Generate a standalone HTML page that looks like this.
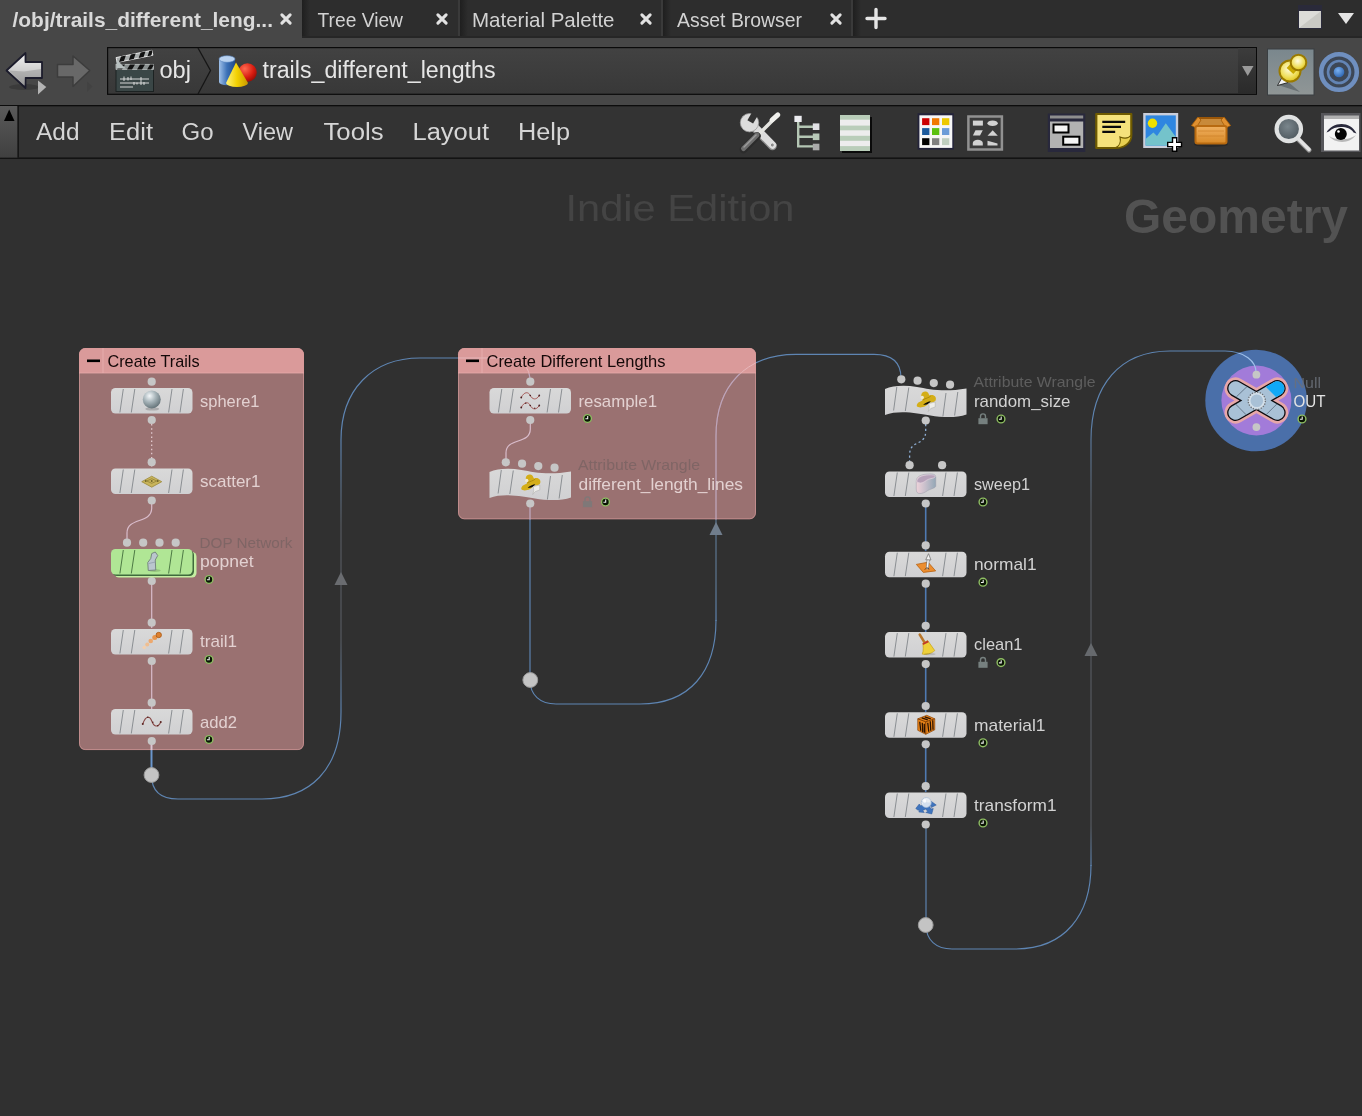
<!DOCTYPE html>
<html><head><meta charset="utf-8"><title>Houdini Network Editor</title>
<style>
html,body{margin:0;padding:0;background:#303030;overflow:hidden}
svg{display:block;font-family:"Liberation Sans", sans-serif;will-change:transform}
text{white-space:pre}
</style></head><body>
<svg width="1362" height="1116" viewBox="0 0 1362 1116">
<defs>
<linearGradient id="gNode" x1="0" y1="0" x2="0" y2="1"><stop offset="0" stop-color="#d9d9d9"/><stop offset="1" stop-color="#d0d0d2"/></linearGradient>
<linearGradient id="gPath" x1="0" y1="0" x2="0" y2="1"><stop offset="0" stop-color="#424242"/><stop offset="1" stop-color="#383838"/></linearGradient>
<linearGradient id="gSweep" x1="0" y1="0" x2="1" y2="0"><stop offset="0" stop-color="#efd3da"/><stop offset="0.45" stop-color="#c9c0cc"/><stop offset="1" stop-color="#93a7b6"/></linearGradient>
<radialGradient id="gSphere" cx="0.38" cy="0.3" r="0.75"><stop offset="0" stop-color="#f4f8fa"/><stop offset="0.45" stop-color="#a9b6bb"/><stop offset="1" stop-color="#5e6d73"/></radialGradient>
</defs>

<rect x="0" y="0" width="1362" height="1116" fill="#303030"/>
<g id="tabbar">
<rect x="0" y="0" width="1362" height="38" fill="#2d2d2d"/>
<rect x="0" y="0" width="302" height="40" fill="#474747"/>
<rect x="0" y="38" width="1362" height="67" fill="#474747"/>
<defs><linearGradient id="gSep" x1="0" y1="0" x2="1" y2="0"><stop offset="0" stop-color="#1f1f1f"/><stop offset="1" stop-color="#2d2d2d"/></linearGradient></defs>
<rect x="302" y="0" width="8" height="38" fill="url(#gSep)"/>
<rect x="460" y="0" width="8" height="38" fill="url(#gSep)"/>
<rect x="458" y="0" width="2" height="38" fill="#3a3a3a"/>
<rect x="663" y="0" width="8" height="38" fill="url(#gSep)"/>
<rect x="661" y="0" width="2" height="38" fill="#3a3a3a"/>
<rect x="853" y="0" width="8" height="38" fill="url(#gSep)"/>
<rect x="851" y="0" width="2" height="38" fill="#3a3a3a"/>
<rect x="302" y="36" width="1060" height="2" fill="#262626"/>
<text x="12.5" y="26.5" font-size="20.8" fill="#d9d9d9" textLength="260.5" lengthAdjust="spacingAndGlyphs" font-weight="bold" >/obj/trails_different_leng...</text>
<text x="317.5" y="26.5" font-size="20.8" fill="#d2d2d2" textLength="85.5" lengthAdjust="spacingAndGlyphs" >Tree View</text>
<text x="472" y="26.5" font-size="20.8" fill="#d2d2d2" textLength="142.5" lengthAdjust="spacingAndGlyphs" >Material Palette</text>
<text x="677" y="26.5" font-size="20.8" fill="#d2d2d2" textLength="125" lengthAdjust="spacingAndGlyphs" >Asset Browser</text>
<path d="M281.9 14.9L290.1 23.1M290.1 14.9L281.9 23.1" stroke="#e2e2e2" stroke-width="3.1" stroke-linecap="round" fill="none"/>
<path d="M437.9 14.9L446.1 23.1M446.1 14.9L437.9 23.1" stroke="#e2e2e2" stroke-width="3.1" stroke-linecap="round" fill="none"/>
<path d="M641.9 14.9L650.1 23.1M650.1 14.9L641.9 23.1" stroke="#e2e2e2" stroke-width="3.1" stroke-linecap="round" fill="none"/>
<path d="M831.9 14.9L840.1 23.1M840.1 14.9L831.9 23.1" stroke="#e2e2e2" stroke-width="3.1" stroke-linecap="round" fill="none"/>
<path d="M876 9.5V27.5M867 18.5H885" stroke="#e6e6e6" stroke-width="3.4" stroke-linecap="round" fill="none"/>
<rect x="1298" y="5" width="24" height="24" fill="#2a2a3a"/>
<rect x="1299" y="11" width="22" height="17" fill="#dcdcd8"/>
<path d="M1299 28L1321 11V28Z" fill="#c9c9c4"/>
<path d="M1338 13H1354L1346 24Z" fill="#e4e4e4"/>
</g>
<g id="pathbar">
<rect x="107.600" y="47.600" width="1148.800" height="46.700" fill="url(#gPath)" stroke="#0a0a0a" stroke-width="1.2"/>
<defs><linearGradient id="gDD" x1="0" y1="0" x2="0" y2="1"><stop offset="0" stop-color="#3c3c3c"/><stop offset="1" stop-color="#2a2a2a"/></linearGradient></defs>
<rect x="1238" y="48" width="18" height="46" fill="url(#gDD)"/>
<path d="M1242 66H1253.500L1247.700 76Z" fill="#9a9a9a"/>
<path d="M198 48L210.500 70.500L198 94" stroke="#161616" stroke-width="1.3" fill="none"/>
<text x="159.5" y="77.5" font-size="23" fill="#e6e6e6" textLength="31.5" lengthAdjust="spacingAndGlyphs" >obj</text>
<text x="262.5" y="77.5" font-size="23" fill="#e6e6e6" textLength="233" lengthAdjust="spacingAndGlyphs" >trails_different_lengths</text>
</g>
<g id="menubar">
<rect x="0" y="105" width="1362" height="54" fill="#333333"/>
<rect x="0" y="105" width="1362" height="1.3" fill="#0c0c0c"/>
<rect x="0" y="157.500" width="1362" height="1.300" fill="#0c0c0c"/>
<defs><linearGradient id="gHandle" x1="0" y1="0" x2="0" y2="1"><stop offset="0" stop-color="#5a5a5a"/><stop offset="1" stop-color="#404040"/></linearGradient></defs>
<rect x="0" y="106" width="17.500" height="51.500" fill="url(#gHandle)"/>
<rect x="17.500" y="106" width="1.300" height="51.500" fill="#101010"/>
<path d="M4 121H14.500L9.200 109.500Z" fill="#000"/>
<text x="36" y="139.5" font-size="23" fill="#d6d6d6" textLength="43.5" lengthAdjust="spacingAndGlyphs" >Add</text>
<text x="109" y="139.5" font-size="23" fill="#d6d6d6" textLength="44" lengthAdjust="spacingAndGlyphs" >Edit</text>
<text x="181.5" y="139.5" font-size="23" fill="#d6d6d6" textLength="32.0" lengthAdjust="spacingAndGlyphs" >Go</text>
<text x="242.5" y="139.5" font-size="23" fill="#d6d6d6" textLength="50.5" lengthAdjust="spacingAndGlyphs" >View</text>
<text x="323.5" y="139.5" font-size="23" fill="#d6d6d6" textLength="60.0" lengthAdjust="spacingAndGlyphs" >Tools</text>
<text x="412.5" y="139.5" font-size="23" fill="#d6d6d6" textLength="76.5" lengthAdjust="spacingAndGlyphs" >Layout</text>
<text x="518" y="139.5" font-size="23" fill="#d6d6d6" textLength="52" lengthAdjust="spacingAndGlyphs" >Help</text>
</g>
<text x="565.5" y="220.5" font-size="37" fill="#444444" textLength="229" lengthAdjust="spacingAndGlyphs" >Indie Edition</text>
<text x="1124" y="233" font-size="47.5" fill="#525252" textLength="224" lengthAdjust="spacingAndGlyphs" font-weight="bold" >Geometry</text>
<defs>
<linearGradient id="gW1" gradientUnits="userSpaceOnUse" x1="0" y1="350" x2="0" y2="800"><stop offset="0" stop-color="#5e85b3"/><stop offset="0.2" stop-color="#5e85b3"/><stop offset="0.389" stop-color="#565a60"/><stop offset="0.644" stop-color="#565a60"/><stop offset="0.804" stop-color="#5e85b3"/><stop offset="1" stop-color="#5e85b3"/></linearGradient>
<linearGradient id="gW2" gradientUnits="userSpaceOnUse" x1="0" y1="350" x2="0" y2="705"><stop offset="0" stop-color="#5e85b3"/><stop offset="0.338" stop-color="#5e85b3"/><stop offset="0.479" stop-color="#5d7894"/><stop offset="0.648" stop-color="#5d7894"/><stop offset="0.761" stop-color="#5e85b3"/><stop offset="1" stop-color="#5e85b3"/></linearGradient>
<linearGradient id="gW3" gradientUnits="userSpaceOnUse" x1="0" y1="350" x2="0" y2="950"><stop offset="0" stop-color="#5e85b3"/><stop offset="0.108" stop-color="#5e85b3"/><stop offset="0.267" stop-color="#565a60"/><stop offset="0.792" stop-color="#565a60"/><stop offset="0.86" stop-color="#5e85b3"/><stop offset="1" stop-color="#5e85b3"/></linearGradient>
<clipPath id="cBoxes"><rect x="79" y="348" width="225" height="402.500" rx="8"/><rect x="458" y="348" width="298" height="171.500" rx="8"/></clipPath>
<clipPath id="cRing"><circle cx="1256.2" cy="400.5" r="50.800"/></clipPath>
</defs>
<path d="M151.500 740V775C151.500 790 160 799 178 799H262C310 799 341 770 341 712V440C341 390 372 358 420 358H505C520 358 530 366 530 381" stroke="url(#gW1)" stroke-width="1.15" fill="none" />
<path d="M716 621V436C716 386 746 354.300 796 354.300H874C892 354.300 901 362 901 378" stroke="url(#gW2)" stroke-width="1.15" fill="none" />
<path d="M530 502V680C530 695 540 704 556 704H640C690 704 716 672 716 620" stroke="#5e85b3" stroke-width="1.15" fill="none" />
<path d="M1091 866V440C1091 385 1120 351 1170 351H1225C1245 351 1256 362 1256 378" stroke="url(#gW3)" stroke-width="1.15" fill="none" />
<path d="M926 823V925C926 940 936 949 952 949H1015C1065 949 1091 915 1091 865" stroke="#5e85b3" stroke-width="1.15" fill="none" />
<path d="M334.5 585H347.5L341 572Z" fill="#6a6c70"/>
<path d="M709.5 535H722.5L716 522Z" fill="#707d8c"/>
<path d="M1084.5 656H1097.5L1091 643Z" fill="#66696d"/>
<rect x="79" y="348" width="225" height="402.1" rx="6.5" fill="#c48a8a" fill-opacity="0.72"/>
<rect x="79.5" y="348.5" width="224" height="401.1" rx="6.0" fill="none" stroke="#e0a2a2" stroke-opacity="0.55" stroke-width="1"/>
<path d="M79 373V354.5A6.5 6.5 0 0 1 85.5 348H297.5A6.5 6.5 0 0 1 304 354.5V373Z" fill="#da9a9a"/>
<rect x="458" y="348" width="298" height="171.3" rx="6.5" fill="#c48a8a" fill-opacity="0.72"/>
<rect x="458.5" y="348.5" width="297" height="170.3" rx="6.0" fill="none" stroke="#e0a2a2" stroke-opacity="0.55" stroke-width="1"/>
<path d="M458 373V354.5A6.5 6.5 0 0 1 464.5 348H749.5A6.5 6.5 0 0 1 756 354.5V373Z" fill="#da9a9a"/>
<clipPath id="cBody"><rect x="79" y="373.500" width="225" height="377"/><rect x="458" y="373.500" width="298" height="146"/></clipPath>
<clipPath id="cHead"><rect x="79" y="348" width="225" height="25.500"/><rect x="458" y="348" width="298" height="25.500"/></clipPath>
<path d="M151.500 740V775C151.500 790 160 799 178 799H262C310 799 341 770 341 712V440C341 390 372 358 420 358H505C520 358 530 366 530 381" stroke="#bfa5ba" stroke-width="1.1" fill="none" clip-path="url(#cBody)"/>
<path d="M530 502V680C530 695 540 704 556 704H640C690 704 716 672 716 620V436C716 386 746 354.300 796 354.300H874C892 354.300 901 362 901 378" stroke="#bfa5ba" stroke-width="1.1" fill="none" clip-path="url(#cBody)"/>
<path d="M151.500 740V775C151.500 790 160 799 178 799H262C310 799 341 770 341 712V440C341 390 372 358 420 358H505C520 358 530 366 530 381" stroke="#e6b6ba" stroke-width="1" fill="none" clip-path="url(#cHead)"/>
<path d="M530 502V680C530 695 540 704 556 704H640C690 704 716 672 716 620V436C716 386 746 354.300 796 354.300H874C892 354.300 901 362 901 378" stroke="#e6b6ba" stroke-width="1" fill="none" clip-path="url(#cHead)"/>
<path d="M151.500 744V750.200" stroke="#dcc4d2" stroke-width="1.9" fill="none" />
<path d="M151.500 750.200V768" stroke="#6a96cc" stroke-width="1.9" fill="none" />
<rect x="79" y="372.5" width="225" height="1" fill="#e6aaaa" opacity="0.8"/>
<rect x="102.5" y="348" width="1" height="25" fill="#e8b0b0" opacity="0.8"/>
<rect x="87" y="359.5" width="13" height="2.600" fill="#000"/>
<text x="107.5" y="366.5" font-size="16.2" fill="#140808" textLength="92" lengthAdjust="spacingAndGlyphs" >Create Trails</text>
<rect x="458" y="372.5" width="298" height="1" fill="#e6aaaa" opacity="0.8"/>
<rect x="481.5" y="348" width="1" height="25" fill="#e8b0b0" opacity="0.8"/>
<rect x="466" y="359.5" width="13" height="2.600" fill="#000"/>
<text x="486.5" y="366.5" font-size="16.2" fill="#140808" textLength="179" lengthAdjust="spacingAndGlyphs" >Create Different Lengths</text>
<path d="M151.700 420V468" stroke="#e6cfd4" stroke-width="1.200" stroke-dasharray="1.5 2.6" fill="none"/>
<path d="M151.700 500V508C151.700 524 127 517 127 533V540" stroke="#d9bccb" stroke-width="1.2" fill="none" />
<path d="M151.700 580V628" stroke="#d9bccb" stroke-width="1.2" fill="none" />
<path d="M151.700 660V709" stroke="#d9bccb" stroke-width="1.2" fill="none" />
<path d="M530.300 420V429C530.300 445 506 437 506 453V460" stroke="#d9bccb" stroke-width="1.2" fill="none" />
<circle cx="151.7" cy="381.7" r="4.1" fill="#c6c6c6"/>
<circle cx="151.75" cy="420.0" r="4.1" fill="#c6c6c6"/>
<rect x="111" y="388.0" width="81.5" height="25.5" rx="4.500" fill="url(#gNode)"/>
<path d="M123.3 389.0L119.9 412.5" stroke="#8b8f93" stroke-width="1" fill="none"/>
<path d="M134.8 389.0L131.3 412.5" stroke="#8b8f93" stroke-width="1" fill="none"/>
<path d="M172 389.0L168.6 412.5" stroke="#8b8f93" stroke-width="1" fill="none"/>
<path d="M183.4 389.0L180 412.5" stroke="#8b8f93" stroke-width="1" fill="none"/>
<g transform="translate(151.75 400.5)"><ellipse cx="0.500" cy="8.500" rx="7" ry="1.600" fill="#000" opacity="0.18"/><circle cx="0" cy="-1" r="9" fill="url(#gSphere)"/></g>
<text x="200.0" y="407.0" font-size="16.6" fill="#e3d1d1" textLength="59.5" lengthAdjust="spacingAndGlyphs" >sphere1</text>
<circle cx="151.7" cy="462.2" r="4.1" fill="#c6c6c6"/>
<circle cx="151.75" cy="500.5" r="4.1" fill="#c6c6c6"/>
<rect x="111" y="468.5" width="81.5" height="25.5" rx="4.500" fill="url(#gNode)"/>
<path d="M123.3 469.5L119.9 493.0" stroke="#8b8f93" stroke-width="1" fill="none"/>
<path d="M134.8 469.5L131.3 493.0" stroke="#8b8f93" stroke-width="1" fill="none"/>
<path d="M172 469.5L168.6 493.0" stroke="#8b8f93" stroke-width="1" fill="none"/>
<path d="M183.4 469.5L180 493.0" stroke="#8b8f93" stroke-width="1" fill="none"/>
<g transform="translate(151.75 481)"><path d="M-10 0.700L0 -4.800L10 0.700L0 6.200Z" fill="#c9b45a" stroke="#9c8a3c" stroke-width="0.800"/><path d="M-5 0L0 -2.300L5 0L0 2.300Z" fill="none" stroke="#8a7a30" stroke-width="0.700"/><circle cx="-6" cy="0" r="0.900" fill="#6e6226"/><circle cx="6" cy="0" r="0.900" fill="#6e6226"/><circle cx="0" cy="0" r="0.900" fill="#6e6226"/></g>
<text x="200.0" y="487" font-size="16.6" fill="#e3d1d1" textLength="60.5" lengthAdjust="spacingAndGlyphs" >scatter1</text>
<circle cx="127" cy="542.7" r="4.1" fill="#c6c6c6"/>
<circle cx="143.2" cy="542.7" r="4.1" fill="#c6c6c6"/>
<circle cx="159.5" cy="542.7" r="4.1" fill="#c6c6c6"/>
<circle cx="175.7" cy="542.7" r="4.1" fill="#c6c6c6"/>
<circle cx="151.75" cy="581.0" r="4.1" fill="#c6c6c6"/>
<rect x="114.5" y="552.0" width="82.0" height="25.5" rx="4.500" fill="#c4efa2"/>
<rect x="112.5" y="550.5" width="81.5" height="25.5" rx="4.500" fill="#3f6b3c"/>
<rect x="111" y="549.0" width="81.5" height="25.5" rx="4.500" fill="#b0e695"/>
<path d="M123.3 550.0L119.9 573.5" stroke="#4d7a45" stroke-width="1" fill="none"/>
<path d="M134.8 550.0L131.3 573.5" stroke="#4d7a45" stroke-width="1" fill="none"/>
<path d="M172 550.0L168.6 573.5" stroke="#4d7a45" stroke-width="1" fill="none"/>
<path d="M183.4 550.0L180 573.5" stroke="#4d7a45" stroke-width="1" fill="none"/>
<g transform="translate(151.75 561.5)"><ellipse cx="3" cy="9" rx="6" ry="1.500" fill="#000" opacity="0.15"/><path d="M-3.500 9L-4 1L-1 -3L0 -8L3.500 -9.500L6 -6L3.500 -1.500L4 8.500Z" fill="#bac6ce" stroke="#6e7f78" stroke-width="0.900"/><path d="M-3 2L3.500 0.500" stroke="#8a97a6" stroke-width="0.700"/></g>
<text x="199.5" y="547.7" font-size="14.3" fill="#7f6565" textLength="93" lengthAdjust="spacingAndGlyphs" >DOP Network</text>
<text x="200.0" y="566.8" font-size="16.6" fill="#e3d1d1" textLength="53.5" lengthAdjust="spacingAndGlyphs" >popnet</text>
<circle cx="209.0" cy="579.5" r="3.900" fill="#0a1404" stroke="#8fbf63" stroke-width="1.400"/>
<path d="M209.2 577.1V579.8H206.9" stroke="#f2f2f2" stroke-width="1.100" fill="none"/>
<circle cx="151.7" cy="622.7" r="4.1" fill="#c6c6c6"/>
<circle cx="151.75" cy="661.0" r="4.1" fill="#c6c6c6"/>
<rect x="111" y="629.0" width="81.5" height="25.5" rx="4.500" fill="url(#gNode)"/>
<path d="M123.3 630.0L119.9 653.5" stroke="#8b8f93" stroke-width="1" fill="none"/>
<path d="M134.8 630.0L131.3 653.5" stroke="#8b8f93" stroke-width="1" fill="none"/>
<path d="M172 630.0L168.6 653.5" stroke="#8b8f93" stroke-width="1" fill="none"/>
<path d="M183.4 630.0L180 653.5" stroke="#8b8f93" stroke-width="1" fill="none"/>
<g transform="translate(151.75 641.5)"><circle cx="-7.500" cy="6" r="1.800" fill="#f2d0b0"/><circle cx="-4.500" cy="3" r="2" fill="#f0be90"/><circle cx="-1" cy="-0.500" r="2.300" fill="#eda86e"/><circle cx="3" cy="-4" r="2.500" fill="#e8964e"/><circle cx="7" cy="-6.500" r="2.700" fill="#dd8030" stroke="#a85a18" stroke-width="0.800"/></g>
<text x="200.0" y="646.7" font-size="16.6" fill="#e3d1d1" textLength="37" lengthAdjust="spacingAndGlyphs" >trail1</text>
<circle cx="209.0" cy="659.5" r="3.900" fill="#0a1404" stroke="#8fbf63" stroke-width="1.400"/>
<path d="M209.2 657.1V659.8H206.9" stroke="#f2f2f2" stroke-width="1.100" fill="none"/>
<circle cx="151.7" cy="702.7" r="4.1" fill="#c6c6c6"/>
<circle cx="151.75" cy="741.0" r="4.1" fill="#c6c6c6"/>
<rect x="111" y="709.0" width="81.5" height="25.5" rx="4.500" fill="url(#gNode)"/>
<path d="M123.3 710.0L119.9 733.5" stroke="#8b8f93" stroke-width="1" fill="none"/>
<path d="M134.8 710.0L131.3 733.5" stroke="#8b8f93" stroke-width="1" fill="none"/>
<path d="M172 710.0L168.6 733.5" stroke="#8b8f93" stroke-width="1" fill="none"/>
<path d="M183.4 710.0L180 733.5" stroke="#8b8f93" stroke-width="1" fill="none"/>
<g transform="translate(151.75 721.5)"><path d="M-9 2.500C-6 -6 -2 -6 0 -0.500S6 7 9 0.500" stroke="#864644" stroke-width="1.050" fill="none"/><circle cx="-9" cy="2.500" r="1" fill="#5a2220"/><circle cx="-4" cy="-4.200" r="0.800" fill="#5a2220"/><circle cx="1" cy="0.800" r="0.800" fill="#5a2220"/><circle cx="6" cy="4.200" r="0.800" fill="#5a2220"/><circle cx="9" cy="0.500" r="1" fill="#5a2220"/></g>
<text x="200.0" y="727.5" font-size="16.6" fill="#e3d1d1" textLength="37" lengthAdjust="spacingAndGlyphs" >add2</text>
<circle cx="209.0" cy="739.5" r="3.900" fill="#0a1404" stroke="#8fbf63" stroke-width="1.400"/>
<path d="M209.2 737.1V739.8H206.9" stroke="#f2f2f2" stroke-width="1.100" fill="none"/>
<circle cx="530.3" cy="381.7" r="4.1" fill="#c6c6c6"/>
<circle cx="530.25" cy="420.0" r="4.1" fill="#c6c6c6"/>
<rect x="489.5" y="388.0" width="81.5" height="25.5" rx="4.500" fill="url(#gNode)"/>
<path d="M501.8 389.0L498.4 412.5" stroke="#8b8f93" stroke-width="1" fill="none"/>
<path d="M513.3 389.0L509.8 412.5" stroke="#8b8f93" stroke-width="1" fill="none"/>
<path d="M550.5 389.0L547.1 412.5" stroke="#8b8f93" stroke-width="1" fill="none"/>
<path d="M561.9 389.0L558.5 412.5" stroke="#8b8f93" stroke-width="1" fill="none"/>
<g transform="translate(530.25 400.5)"><path d="M-9 -3C-6 -9 -2 -9 0 -5S6 0 9 -5" stroke="#a85c5a" stroke-width="1" fill="none"/><path d="M-9 7C-6 1 -2 1 0 5S6 10 9 5" stroke="#a85c5a" stroke-width="1" fill="none"/><circle cx="-9" cy="-3" r="0.900" fill="#4a2020"/><circle cx="0" cy="-5" r="0.800" fill="#4a2020"/><circle cx="9" cy="-5" r="0.900" fill="#4a2020"/><circle cx="-9" cy="7" r="0.900" fill="#4a2020"/><circle cx="-4.500" cy="2.800" r="0.700" fill="#4a2020"/><circle cx="0" cy="5" r="0.800" fill="#4a2020"/><circle cx="4.500" cy="7.800" r="0.700" fill="#4a2020"/><circle cx="9" cy="5" r="0.900" fill="#4a2020"/></g>
<text x="578.5" y="407.0" font-size="16.6" fill="#e3d1d1" textLength="78.5" lengthAdjust="spacingAndGlyphs" >resample1</text>
<circle cx="587.5" cy="418.5" r="3.900" fill="#0a1404" stroke="#8fbf63" stroke-width="1.400"/>
<path d="M587.7 416.1V418.8H585.4" stroke="#f2f2f2" stroke-width="1.100" fill="none"/>
<circle cx="505.8" cy="462.3" r="4.1" fill="#c6c6c6"/>
<circle cx="522.05" cy="463.7" r="4.1" fill="#c6c6c6"/>
<circle cx="538.3" cy="466.1" r="4.1" fill="#c6c6c6"/>
<circle cx="554.55" cy="467.7" r="4.1" fill="#c6c6c6"/>
<circle cx="530.25" cy="503.5" r="4.1" fill="#c6c6c6"/>
<path d="M489.5 472.0C497.5 468.5 509.5 468.0 521.5 470.0S547.5 475.5 571.0 471.5V497.5C561.0 501.0 547.0 500.5 535.0 498.5S503.5 492.5 489.5 498.0Z" fill="url(#gNode)"/>
<path d="M501.3 470.0L498.1 493.5" stroke="#8b8f93" stroke-width="1" fill="none"/>
<path d="M513.3 470.5L509.8 494.0" stroke="#8b8f93" stroke-width="1" fill="none"/>
<path d="M550.5 476.0L547.4 499.5" stroke="#8b8f93" stroke-width="1" fill="none"/>
<path d="M562.3 475.0L559.1 498.5" stroke="#8b8f93" stroke-width="1" fill="none"/>
<g transform="translate(530.25 484)"><path d="M-9 5C-9 1 -5 1 -3 -1C-6 -6 -4 -10 0 -9.500C3 -9 3 -6 4 -5.500C8 -7 11 -4 10 -1C9 2 5 1 3 2C1 6 -7 8 -9 5Z" fill="#d4ae18"/><path d="M-3 -1C0 -3 3 -3 5 -5" stroke="#b08c0c" stroke-width="1" fill="none"/><path d="M-2.500 3.500C0 1.500 3 0.500 5 0.300C4 2.500 0 4.500 -2.500 3.500Z" fill="#0a0a0a"/><circle cx="-3.500" cy="-3.500" r="1.700" fill="#f0ead0"/><path d="M3 2.500L9.500 1V6L5 7.500L2.500 10.500L3.500 6.500Z" fill="#eeeeea" stroke="#b4b4b0" stroke-width="0.600"/></g>
<text x="578.0" y="470.2" font-size="14.3" fill="#7f6565" textLength="122" lengthAdjust="spacingAndGlyphs" >Attribute Wrangle</text>
<text x="578.5" y="489.5" font-size="16.6" fill="#e3d1d1" textLength="164.5" lengthAdjust="spacingAndGlyphs" >different_length_lines</text>
<path d="M585.0 501.5V499.4A2.500 2.500 0 0 1 590.0 499.4V501.5" stroke="#7f7878" stroke-width="1.400" fill="none"/>
<rect x="582.9" y="501.2" width="9.200" height="6" fill="#7f7878"/>
<circle cx="605.5" cy="502" r="3.900" fill="#0a1404" stroke="#8fbf63" stroke-width="1.400"/>
<path d="M605.7 499.6V502.3H603.4" stroke="#f2f2f2" stroke-width="1.100" fill="none"/>
<path d="M925.700 424V431C925.700 447 909.600 439 909.600 455V462" stroke="#8fb0d6" stroke-width="1.300" stroke-dasharray="2.2 2.600" fill="none"/>
<path d="M925.700 503V551" stroke="#4f7ab2" stroke-width="1.6" fill="none" />
<path d="M925.700 583V632" stroke="#4f7ab2" stroke-width="1.6" fill="none" />
<path d="M925.700 664V712" stroke="#4f7ab2" stroke-width="1.6" fill="none" />
<path d="M925.700 744V792" stroke="#4f7ab2" stroke-width="1.6" fill="none" />
<circle cx="901.3" cy="379.3" r="4.1" fill="#c6c6c6"/>
<circle cx="917.55" cy="380.7" r="4.1" fill="#c6c6c6"/>
<circle cx="933.8" cy="383.1" r="4.1" fill="#c6c6c6"/>
<circle cx="950.05" cy="384.7" r="4.1" fill="#c6c6c6"/>
<circle cx="925.75" cy="420.5" r="4.1" fill="#c6c6c6"/>
<path d="M885 389.0C893 385.5 905 385.0 917 387.0S943 392.5 966.5 388.5V414.5C956.5 418.0 942.5 417.5 930.5 415.5S899 409.5 885 415.0Z" fill="url(#gNode)"/>
<path d="M896.8 387.0L893.6 410.5" stroke="#8b8f93" stroke-width="1" fill="none"/>
<path d="M908.8 387.5L905.3 411.0" stroke="#8b8f93" stroke-width="1" fill="none"/>
<path d="M946 393.0L942.9 416.5" stroke="#8b8f93" stroke-width="1" fill="none"/>
<path d="M957.8 392.0L954.6 415.5" stroke="#8b8f93" stroke-width="1" fill="none"/>
<g transform="translate(925.75 401)"><path d="M-9 5C-9 1 -5 1 -3 -1C-6 -6 -4 -10 0 -9.500C3 -9 3 -6 4 -5.500C8 -7 11 -4 10 -1C9 2 5 1 3 2C1 6 -7 8 -9 5Z" fill="#d4ae18"/><path d="M-3 -1C0 -3 3 -3 5 -5" stroke="#b08c0c" stroke-width="1" fill="none"/><path d="M-2.500 3.500C0 1.500 3 0.500 5 0.300C4 2.500 0 4.500 -2.500 3.500Z" fill="#0a0a0a"/><circle cx="-3.500" cy="-3.500" r="1.700" fill="#f0ead0"/><path d="M3 2.500L9.500 1V6L5 7.500L2.500 10.500L3.500 6.500Z" fill="#eeeeea" stroke="#b4b4b0" stroke-width="0.600"/></g>
<text x="973.5" y="387.2" font-size="14.3" fill="#5e5e5e" textLength="122" lengthAdjust="spacingAndGlyphs" >Attribute Wrangle</text>
<text x="974.0" y="406.5" font-size="16.6" fill="#d2d2d2" textLength="96.5" lengthAdjust="spacingAndGlyphs" >random_size</text>
<path d="M980.5 418.5V416.4A2.500 2.500 0 0 1 985.5 416.4V418.5" stroke="#76807f" stroke-width="1.400" fill="none"/>
<rect x="978.4" y="418.2" width="9.200" height="6" fill="#76807f"/>
<circle cx="1001.0" cy="419" r="3.900" fill="#0a1404" stroke="#8fbf63" stroke-width="1.400"/>
<path d="M1001.2 416.6V419.3H998.9" stroke="#f2f2f2" stroke-width="1.100" fill="none"/>
<circle cx="909.6" cy="465.2" r="4.1" fill="#c6c6c6"/>
<circle cx="942.1" cy="465.2" r="4.1" fill="#c6c6c6"/>
<circle cx="925.75" cy="503.5" r="4.1" fill="#c6c6c6"/>
<rect x="885" y="471.5" width="81.5" height="25.5" rx="4.500" fill="url(#gNode)"/>
<path d="M897.3 472.5L893.9 496.0" stroke="#8b8f93" stroke-width="1" fill="none"/>
<path d="M908.8 472.5L905.3 496.0" stroke="#8b8f93" stroke-width="1" fill="none"/>
<path d="M946 472.5L942.6 496.0" stroke="#8b8f93" stroke-width="1" fill="none"/>
<path d="M957.4 472.5L954 496.0" stroke="#8b8f93" stroke-width="1" fill="none"/>
<g transform="translate(925.75 484)"><path d="M-9.500 -3C-9.500 -8 -3 -10 3 -10C7 -10.500 10 -9.500 10 -7V2C10 4 6 4.500 2 6.500C-1 8.500 -3 9.500 -6 9.500C-8.500 9.500 -9.500 8 -9.500 5Z" fill="url(#gSweep)" stroke="#9a9aa8" stroke-width="0.500"/><path d="M-8.800 -3.500C-8 -7.500 -2 -9 3 -9.200C7 -9.400 9.300 -8.800 9.300 -7.500C9.300 -5.800 6 -5.800 3 -4.800C0 -3.800 -2 -1 -5 -1C-7.500 -1 -9.300 -1.800 -8.800 -3.500Z" fill="#b7a2ba" stroke="#e2d2de" stroke-width="0.700"/></g>
<text x="974.0" y="489.8" font-size="16.6" fill="#d2d2d2" textLength="56" lengthAdjust="spacingAndGlyphs" >sweep1</text>
<circle cx="983.0" cy="502" r="3.900" fill="#0a1404" stroke="#8fbf63" stroke-width="1.400"/>
<path d="M983.2 499.6V502.3H980.9" stroke="#f2f2f2" stroke-width="1.100" fill="none"/>
<circle cx="925.7" cy="545.4000000000001" r="4.1" fill="#c6c6c6"/>
<circle cx="925.75" cy="583.7" r="4.1" fill="#c6c6c6"/>
<rect x="885" y="551.7" width="81.5" height="25.5" rx="4.500" fill="url(#gNode)"/>
<path d="M897.3 552.7L893.9 576.2" stroke="#8b8f93" stroke-width="1" fill="none"/>
<path d="M908.8 552.7L905.3 576.2" stroke="#8b8f93" stroke-width="1" fill="none"/>
<path d="M946 552.7L942.6 576.2" stroke="#8b8f93" stroke-width="1" fill="none"/>
<path d="M957.4 552.7L954 576.2" stroke="#8b8f93" stroke-width="1" fill="none"/>
<g transform="translate(925.75 564.2)"><path d="M-9.400 0.200L2.300 -2L9.900 6.700L-2.400 8.200Z" fill="#ec8e30" stroke="#b6600f" stroke-width="0.800"/><path d="M1.500 5L2.500 -5" stroke="#777" stroke-width="2.800"/><path d="M1.500 5L2.500 -5" stroke="#f4f4f4" stroke-width="1.600"/><path d="M0 -4.500L2.800 -10.500L5.200 -4.200Z" fill="#f4f4f4" stroke="#777" stroke-width="0.800"/><path d="M-1 5.500L1 3.500L3.500 5" stroke="#5a2f08" stroke-width="0.900" fill="none"/></g>
<text x="974.0" y="570.0" font-size="16.6" fill="#d2d2d2" textLength="62.5" lengthAdjust="spacingAndGlyphs" >normal1</text>
<circle cx="983.0" cy="582.2" r="3.900" fill="#0a1404" stroke="#8fbf63" stroke-width="1.400"/>
<path d="M983.2 579.8000000000001V582.5H980.9" stroke="#f2f2f2" stroke-width="1.100" fill="none"/>
<circle cx="925.7" cy="625.8000000000001" r="4.1" fill="#c6c6c6"/>
<circle cx="925.75" cy="664.1" r="4.1" fill="#c6c6c6"/>
<rect x="885" y="632.1" width="81.5" height="25.5" rx="4.500" fill="url(#gNode)"/>
<path d="M897.3 633.1L893.9 656.6" stroke="#8b8f93" stroke-width="1" fill="none"/>
<path d="M908.8 633.1L905.3 656.6" stroke="#8b8f93" stroke-width="1" fill="none"/>
<path d="M946 633.1L942.6 656.6" stroke="#8b8f93" stroke-width="1" fill="none"/>
<path d="M957.4 633.1L954 656.6" stroke="#8b8f93" stroke-width="1" fill="none"/>
<g transform="translate(925.75 644.6)"><path d="M-6 -10L-0.500 -1" stroke="#b9772b" stroke-width="2.600" stroke-linecap="round"/><path d="M-3 -1.500L2 -4L9 6C6 9 0 10.500 -3.500 9.500C-2 6 -2.500 2 -3 -1.500Z" fill="#eed03a" stroke="#c9a414" stroke-width="0.700"/><path d="M-3 -1.500L2 -4L3 -2.300L-2.700 0.500Z" fill="#c0392b"/><ellipse cx="4" cy="9.500" rx="6" ry="1.200" fill="#000" opacity="0.12"/></g>
<text x="974.0" y="650.4" font-size="16.6" fill="#d2d2d2" textLength="48.5" lengthAdjust="spacingAndGlyphs" >clean1</text>
<path d="M980.5 662.1V660.0A2.500 2.500 0 0 1 985.5 660.0V662.1" stroke="#76807f" stroke-width="1.400" fill="none"/>
<rect x="978.4" y="661.8000000000001" width="9.200" height="6" fill="#76807f"/>
<circle cx="1001.0" cy="662.6" r="3.900" fill="#0a1404" stroke="#8fbf63" stroke-width="1.400"/>
<path d="M1001.2 660.2V662.9H998.9" stroke="#f2f2f2" stroke-width="1.100" fill="none"/>
<circle cx="925.7" cy="706.0" r="4.1" fill="#c6c6c6"/>
<circle cx="925.75" cy="744.3" r="4.1" fill="#c6c6c6"/>
<rect x="885" y="712.3" width="81.5" height="25.5" rx="4.500" fill="url(#gNode)"/>
<path d="M897.3 713.3L893.9 736.8" stroke="#8b8f93" stroke-width="1" fill="none"/>
<path d="M908.8 713.3L905.3 736.8" stroke="#8b8f93" stroke-width="1" fill="none"/>
<path d="M946 713.3L942.6 736.8" stroke="#8b8f93" stroke-width="1" fill="none"/>
<path d="M957.4 713.3L954 736.8" stroke="#8b8f93" stroke-width="1" fill="none"/>
<g transform="translate(925.75 724.8)"><path d="M-8 -6L1 -9.500L9 -6V5L0 9.500L-8 5.500Z" fill="#e98418" stroke="#8a4204" stroke-width="0.700"/><path d="M-8 -6L0 -3L9 -6M0 -3V9.500" stroke="#6a3002" stroke-width="0.800" fill="none"/><path d="M-6 -3L-5 6M-3.500 -2L-3 7.500M-1.500 -1L-1.300 8M2 -2L3 7M4.500 -3.500L5 6M7 -4.500L7.300 5M-4 -7L2 -5M-1 -8L5 -6" stroke="#2a1200" stroke-width="1.300" fill="none"/></g>
<text x="974.0" y="730.5999999999999" font-size="16.6" fill="#d2d2d2" textLength="71.5" lengthAdjust="spacingAndGlyphs" >material1</text>
<circle cx="983.0" cy="742.8" r="3.900" fill="#0a1404" stroke="#8fbf63" stroke-width="1.400"/>
<path d="M983.2 740.4V743.0999999999999H980.9" stroke="#f2f2f2" stroke-width="1.100" fill="none"/>
<circle cx="925.7" cy="786.2" r="4.1" fill="#c6c6c6"/>
<circle cx="925.75" cy="824.5" r="4.1" fill="#c6c6c6"/>
<rect x="885" y="792.5" width="81.5" height="25.5" rx="4.500" fill="url(#gNode)"/>
<path d="M897.3 793.5L893.9 817.0" stroke="#8b8f93" stroke-width="1" fill="none"/>
<path d="M908.8 793.5L905.3 817.0" stroke="#8b8f93" stroke-width="1" fill="none"/>
<path d="M946 793.5L942.6 817.0" stroke="#8b8f93" stroke-width="1" fill="none"/>
<path d="M957.4 793.5L954 817.0" stroke="#8b8f93" stroke-width="1" fill="none"/>
<g transform="translate(925.75 805)"><path d="M-10 3.500L-6.500 -1L-5 1L-2 -1L-4 -3.500L1 -4.500L0.500 -2.500L4 -2L5 -4L10.500 0L5.500 2.500L6 0.800L3.500 1.500L5.500 4L7.500 3.500L6 9L0 7.500L2 6.500L0 4L-3 5.500L-1.500 7.500L-7 7L-6 5.500L-8 5Z" fill="#3f74bd" stroke="#2a5698" stroke-width="0.500"/><circle cx="0.500" cy="-2.500" r="5" fill="#eef3f8" fill-opacity="0.850" stroke="#a8bcd4" stroke-width="0.700"/><circle cx="-1" cy="-4" r="1.800" fill="#fff" opacity="0.900"/></g>
<text x="974.0" y="810.8" font-size="16.6" fill="#d2d2d2" textLength="82.5" lengthAdjust="spacingAndGlyphs" >transform1</text>
<circle cx="983.0" cy="823" r="3.900" fill="#0a1404" stroke="#8fbf63" stroke-width="1.400"/>
<path d="M983.2 820.6V823.3H980.9" stroke="#f2f2f2" stroke-width="1.100" fill="none"/>
<circle cx="151.5" cy="775" r="7.400" fill="#c4c4c4" stroke="#9c9c9c" stroke-width="1"/>
<circle cx="530.3" cy="680" r="7.400" fill="#c4c4c4" stroke="#9c9c9c" stroke-width="1"/>
<circle cx="925.7" cy="925" r="7.400" fill="#c4c4c4" stroke="#9c9c9c" stroke-width="1"/>
<circle cx="1256.1000000000001" cy="400.5" r="50.800" fill="#4a6fa9"/>
<circle cx="1256.4" cy="400.5" r="35" fill="#a27bd9"/>
<path d="M1225 351C1245 351 1256 362 1256 372" stroke="#9fc0ea" stroke-width="1.200" fill="none" clip-path="url(#cRing)"/>
<circle cx="1256.4" cy="374.7" r="3.9" fill="#c6c6c6"/>
<circle cx="1256.4" cy="427.1" r="3.9" fill="#c6c6c6"/>
<path d="M1235.5500000000002 412.6L1277.25 388.4M1235.5500000000002 388.4L1277.25 412.6" stroke="#e7a7a8" stroke-width="22" stroke-linecap="round" fill="none"/>
<path d="M1235.5500000000002 412.6L1277.25 388.4M1235.5500000000002 388.4L1277.25 412.6" stroke="#0c0c10" stroke-width="16.800" stroke-linecap="round" fill="none"/>
<path d="M1235.5500000000002 412.6L1277.25 388.4M1235.5500000000002 388.4L1277.25 412.6" stroke="#a9c1d6" stroke-width="14.200" stroke-linecap="round" fill="none"/>
<clipPath id="cFlag"><path d="M1251 372L1300 421V360H1251Z"/></clipPath>
<path d="M1256.4 400.5L1277.25 388.4" stroke="#10a9f6" stroke-width="14.200" stroke-linecap="round" fill="none" clip-path="url(#cFlag)"/>
<path d="M1247.200 386.400L1236.400 396.800M1235.400 403.900L1246.200 414.800M1277 403.900L1266 414.800" stroke="#56677a" stroke-width="0.800" fill="none"/>
<circle cx="1256.8000000000002" cy="400.8" r="7.500" fill="#a9c1d6" stroke="#d3dfe9" stroke-width="2.400"/>
<circle cx="1256.8000000000002" cy="400.8" r="8.600" fill="none" stroke="#6c7075" stroke-width="1.300" stroke-dasharray="1.350 1.350"/>
<text x="1293.5" y="387.5" font-size="14.3" fill="#6b7079" textLength="27.5" lengthAdjust="spacingAndGlyphs" opacity="0.85" >Null</text>
<text x="1293.5" y="406.8" font-size="16.4" fill="#e4e4e4" textLength="32" lengthAdjust="spacingAndGlyphs" >OUT</text>
<circle cx="1302" cy="419" r="3.900" fill="#0a1404" stroke="#8fbf63" stroke-width="1.400"/>
<path d="M1302.2 416.6V419.3H1299.9" stroke="#f2f2f2" stroke-width="1.100" fill="none"/>
<g id="icons">
<defs>
<linearGradient id="gArrow" x1="0" y1="0" x2="0" y2="1"><stop offset="0" stop-color="#f2f2f2"/><stop offset="0.5" stop-color="#cfcfcf"/><stop offset="1" stop-color="#8e8e8e"/></linearGradient>
<linearGradient id="gPin" x1="0" y1="0" x2="0" y2="1"><stop offset="0" stop-color="#7a878d"/><stop offset="1" stop-color="#909696"/></linearGradient>
<linearGradient id="gCyl" x1="0" y1="0" x2="1" y2="0"><stop offset="0" stop-color="#9fc0e8"/><stop offset="0.5" stop-color="#3d72b8"/><stop offset="1" stop-color="#1f4a8a"/></linearGradient>
<radialGradient id="gRed" cx="0.35" cy="0.3" r="0.8"><stop offset="0" stop-color="#ff6a50"/><stop offset="0.6" stop-color="#d81c10"/><stop offset="1" stop-color="#8a0a04"/></radialGradient>
<linearGradient id="gCone" x1="0" y1="0" x2="1" y2="0"><stop offset="0" stop-color="#fff27a"/><stop offset="0.5" stop-color="#f2d000"/><stop offset="1" stop-color="#c89800"/></linearGradient>
<radialGradient id="gLens" cx="0.45" cy="0.4" r="0.7"><stop offset="0" stop-color="#7a868c"/><stop offset="1" stop-color="#454f55"/></radialGradient>
<radialGradient id="gBlueDot" cx="0.4" cy="0.35" r="0.7"><stop offset="0" stop-color="#7ab0f0"/><stop offset="1" stop-color="#2c64b0"/></radialGradient>
<radialGradient id="gPinHead" cx="0.45" cy="0.4" r="0.7"><stop offset="0" stop-color="#fffce0"/><stop offset="0.55" stop-color="#f0e060"/><stop offset="1" stop-color="#d8b800"/></radialGradient>
<linearGradient id="gBoxO" x1="0" y1="0" x2="0" y2="1"><stop offset="0" stop-color="#f0b060"/><stop offset="1" stop-color="#d88a28"/></linearGradient>
</defs>
<ellipse cx="24" cy="87" rx="15" ry="3" fill="#000" opacity="0.18"/>
<path d="M6.500 70.500L25.500 53V62H42V78H25.500V88Z" fill="url(#gArrow)" stroke="#1c1c2c" stroke-width="1.800" stroke-linejoin="round"/>
<path d="M9 70.500L24 71.500L41 69V77H25L24.500 85Z" fill="#9a9a9a" opacity="0.55"/>
<path d="M38 80.500V94.500L46.300 87Z" fill="#b4b4b4"/>
<path d="M89.800 70.500L73 56V64.500H57.500V77H73V86.500Z" fill="#686868" stroke="#3c3c3c" stroke-width="1.500" stroke-linejoin="round"/>
<path d="M87 81.500V92L92.500 86.500Z" fill="#424242"/>
<rect x="116" y="69" width="37.500" height="22.500" fill="#3a4646" stroke="#1c2222" stroke-width="1"/>
<rect x="116" y="64.300" width="37.500" height="5.200" fill="#8a9090" stroke="#c8cccc" stroke-width="0.700"/>
<path d="M120 64.500h5l-3 5h-5zM130 64.500h5l-3 5h-5zM140 64.500h5l-3 5h-5zM150 64.500h3.500v1l-2.400 4h-4z" fill="#111"/>
<g transform="rotate(-11.500 117 62)"><rect x="117" y="57.500" width="36.500" height="5" fill="#a8acac" stroke="#e8e8e8" stroke-width="0.900"/><path d="M122 57.500h5l-3 5h-5zM132 57.500h5l-3 5h-5zM142 57.500h5l-3 5h-5zM151 57.500h2.500v2l-1.700 3h-3.800z" fill="#111"/></g>
<path d="M116.500 60L126 68.500H116.500Z" fill="#b8c0c0"/>
<path d="M120 79H149M120 83H149M120 87H133" stroke="#e8e8e8" stroke-width="0.900"/>
<path d="M124 76.500V81M128 77V80.500M131 76.500V80M141 77V85M134 82V85M137 82.500V84.500M144 82V85" stroke="#e8e8e8" stroke-width="0.900"/>
<path d="M219 59V82A8 3.300 0 0 0 235 82V59Z" fill="url(#gCyl)"/><ellipse cx="227" cy="59" rx="8" ry="3.300" fill="#b9d2f0" stroke="#5a86c0" stroke-width="0.600"/>
<circle cx="247.500" cy="72.500" r="9.300" fill="url(#gRed)"/>
<path d="M236 62.500L226 83A11 4 0 0 0 248 83Z" fill="url(#gCone)"/>
<rect x="1267.500" y="49" width="46.500" height="46" fill="url(#gPin)" stroke="#3a3f42" stroke-width="1"/>
<path d="M1278 85L1300 92L1287 81Z" fill="#4a5256" opacity="0.55"/>
<path d="M1277.500 85.500L1282 77.500L1288 82.500Z" fill="#f4f4f4" stroke="#111" stroke-width="0.800"/>
<circle cx="1290" cy="71" r="10.500" fill="url(#gPinHead)" stroke="#9a7a00" stroke-width="2"/>
<path d="M1290 71L1298 62" stroke="#c8a800" stroke-width="9"/>
<circle cx="1298.500" cy="62.500" r="7.800" fill="url(#gPinHead)" stroke="#9a7a00" stroke-width="2"/>
<circle cx="1339" cy="72" r="17.800" fill="#3d4756" stroke="#6f8fbf" stroke-width="4.600"/>
<circle cx="1339" cy="72" r="11" fill="none" stroke="#6384b4" stroke-width="2.600"/>
<circle cx="1339" cy="72" r="5.300" fill="url(#gBlueDot)"/>
<path d="M752 125L772.500 146" stroke="#8a8a8a" stroke-width="8.500" stroke-linecap="round"/>
<path d="M752 124L772.500 145" stroke="#dcdcdc" stroke-width="7.500" stroke-linecap="round"/>
<circle cx="772.300" cy="145" r="2" fill="#8a8a8a" stroke="#f0f0f0" stroke-width="0.800"/>
<circle cx="749.500" cy="122.700" r="9.200" fill="#dcdcdc" stroke="#9a9a9a" stroke-width="0.800"/>
<rect x="-3.300" y="-13" width="6.600" height="12.500" fill="#333333" transform="translate(750 122.300) rotate(30)"/>
<path d="M777.500 115.500L758 135" stroke="#e4e4e0" stroke-width="3.600" stroke-linecap="round"/>
<path d="M777.800 114.800L772 120" stroke="#f0f0ec" stroke-width="5" stroke-linecap="round"/>
<path d="M757 136L743.500 149.500" stroke="#2c2c2c" stroke-width="7.500" stroke-linecap="round"/>
<path d="M757 135L743.500 148.500" stroke="#6e6e6e" stroke-width="5" stroke-linecap="round"/>
<path d="M756 135L744 147" stroke="#9c9c9c" stroke-width="1.500" stroke-linecap="round"/>
<path d="M798.200 121.500V146.500M798.200 126.700H813M798.200 136.700H813M797 146.400H813" stroke="#b4c6b4" stroke-width="2.400" fill="none"/>
<rect x="794.400" y="115.800" width="7.300" height="6.200" fill="#ececf0"/>
<rect x="812.800" y="123.400" width="6.600" height="6.600" fill="#e2e2e6"/><rect x="812.800" y="133.500" width="6.600" height="6.600" fill="#b9cab9"/><rect x="812.800" y="143.700" width="6.600" height="6.600" fill="#aaaaaa"/>
<rect x="842" y="117" width="30" height="36" fill="#0a0a0a"/>
<rect x="840" y="115" width="30" height="36" fill="#ededed"/>
<rect x="840" y="115" width="30" height="4.7" fill="#b9cdb9"/>
<rect x="840" y="125.6" width="30" height="4.7" fill="#b9cdb9"/>
<rect x="840" y="135.8" width="30" height="5.0" fill="#b9cdb9"/>
<rect x="840" y="146.1" width="30" height="4.9" fill="#b9cdb9"/>
<rect x="917.600" y="113.200" width="36.200" height="36.400" fill="#23233a"/>
<rect x="919.400" y="115.300" width="32.900" height="32.600" fill="#f6f6f6"/>
<rect x="922.1" y="118.2" width="7.300" height="6.900" fill="#cc0000"/>
<rect x="932" y="118.2" width="7.300" height="6.900" fill="#f07800"/>
<rect x="942" y="118.2" width="7.300" height="6.900" fill="#edc800"/>
<rect x="922.1" y="128.1" width="7.300" height="6.900" fill="#1c5a9c"/>
<rect x="932" y="128.1" width="7.300" height="6.900" fill="#5cc010"/>
<rect x="942" y="128.1" width="7.300" height="6.900" fill="#6c9cd8"/>
<rect x="922.1" y="138.2" width="7.300" height="6.900" fill="#000000"/>
<rect x="932" y="138.2" width="7.300" height="6.900" fill="#808080"/>
<rect x="942" y="138.2" width="7.300" height="6.900" fill="#c0cfc0"/>
<rect x="968.400" y="116.500" width="33.500" height="33" fill="#3a3a3a" stroke="#919191" stroke-width="2.500"/>
<rect x="972.900" y="120.600" width="10" height="5" fill="#d2d2d2"/><ellipse cx="992.600" cy="123.200" rx="5.200" ry="2.800" fill="#d2d2d2"/>
<path d="M975.500 130.300H982.800L980 135.500H972.900Z" fill="#d2d2d2"/><path d="M987.500 135.800L992.700 130.300L997.800 135.800Z" fill="#d2d2d2"/>
<path d="M972.800 145.500V143A5 3.200 0 0 1 982.800 143V145.500Z" fill="#d2d2d2"/><path d="M987.500 145.500V140.800L997.500 143.500V145.500Z" fill="#d2d2d2"/>
<rect x="1047.800" y="113.500" width="37.500" height="38.500" fill="#28283c"/>
<rect x="1050" y="115.500" width="33.200" height="3" fill="#8e8e8e"/>
<rect x="1050" y="121.500" width="33.200" height="26.500" fill="#b2b2b2"/>
<rect x="1053.500" y="124.500" width="15" height="8" fill="#f4f4f4" stroke="#000" stroke-width="2"/>
<rect x="1063.200" y="136.700" width="16.200" height="8" fill="#f4f4f4" stroke="#000" stroke-width="2"/>
<path d="M1096.300 114H1131.300V135C1131.300 143 1124 148 1115 148H1096.300Z" fill="#f5e27c" stroke="#6e5a00" stroke-width="2.200" stroke-linejoin="round"/>
<path d="M1115 148C1120 146 1121 141 1120 137C1125 139 1129 138 1131.300 135C1131 143 1124 148 1115 148Z" fill="#e8d050" stroke="#6e5a00" stroke-width="1.200"/>
<path d="M1102.300 121.800H1125.200M1102.300 126.800H1121M1102.300 131.800H1115.200" stroke="#0a0a0a" stroke-width="2.300"/>
<rect x="1143.200" y="113" width="35" height="35" fill="#c9cedb"/>
<rect x="1145.600" y="115.400" width="30.200" height="30.200" fill="#2f86e0"/>
<path d="M1145.600 145.600V139L1153.400 132.500L1157 136L1165.800 123.200L1175.800 137V145.600Z" fill="#74c3cb"/>
<circle cx="1152.500" cy="123.200" r="4.700" fill="#f0e000"/>
<path d="M1174.600 137V152M1167 144.500H1182.200" stroke="#000" stroke-width="5.600" fill="none"/>
<path d="M1174.600 138.400V150.600M1168.400 144.500H1180.800" stroke="#fff" stroke-width="2.800" fill="none"/>
<ellipse cx="1211" cy="144.500" rx="17" ry="2.500" fill="#000" opacity="0.2"/>
<path d="M1198 117H1224L1231 126H1191Z" fill="#9a5608"/>
<path d="M1200 119H1222L1226 125H1196Z" fill="#c88a3a"/>
<path d="M1198 117L1191.500 125.500L1196 128L1201 120Z" fill="#e09030" stroke="#a05a08" stroke-width="0.800"/><path d="M1224 117L1230.500 125.500L1226 128L1221 120Z" fill="#e09030" stroke="#a05a08" stroke-width="0.800"/>
<rect x="1195.500" y="126" width="31" height="17.500" rx="2" fill="url(#gBoxO)" stroke="#b86a10" stroke-width="2"/>
<path d="M1198 131H1224M1198 136H1224" stroke="#c87a20" stroke-width="0.800" opacity="0.7"/>
<path d="M1298 139L1309 150" stroke="#8a8a8a" stroke-width="5.200" stroke-linecap="round"/>
<path d="M1298 138.500L1309 149.500" stroke="#e2e2e2" stroke-width="3.600" stroke-linecap="round"/>
<circle cx="1288.800" cy="129" r="12.200" fill="url(#gLens)" stroke="#e0e2e2" stroke-width="4.200"/>
<rect x="1321" y="113" width="39.500" height="39" fill="#56565a"/>
<rect x="1324" y="119" width="35" height="31.500" fill="#f2f2f2"/>
<rect x="1324" y="115.500" width="35" height="3.500" fill="#b0b0b0"/>
<path d="M1327 133C1333 124 1349 123 1356 134C1349 143 1334 143 1327 133Z" fill="#f6f6f6"/>
<path d="M1329 136C1335 144 1350 144 1356 135C1350 140 1336 141 1329 136Z" fill="#b8b8b8"/>
<path d="M1326.500 132.500C1332 122 1350 120 1356.500 133.500L1353.500 132.500C1349 125.500 1335 125.500 1329 131.500Z" fill="#2a2a3c"/>
<circle cx="1340.800" cy="134" r="6" fill="#050505"/><circle cx="1338.500" cy="131.500" r="1.300" fill="#fff"/>
</g>
</svg></body></html>
